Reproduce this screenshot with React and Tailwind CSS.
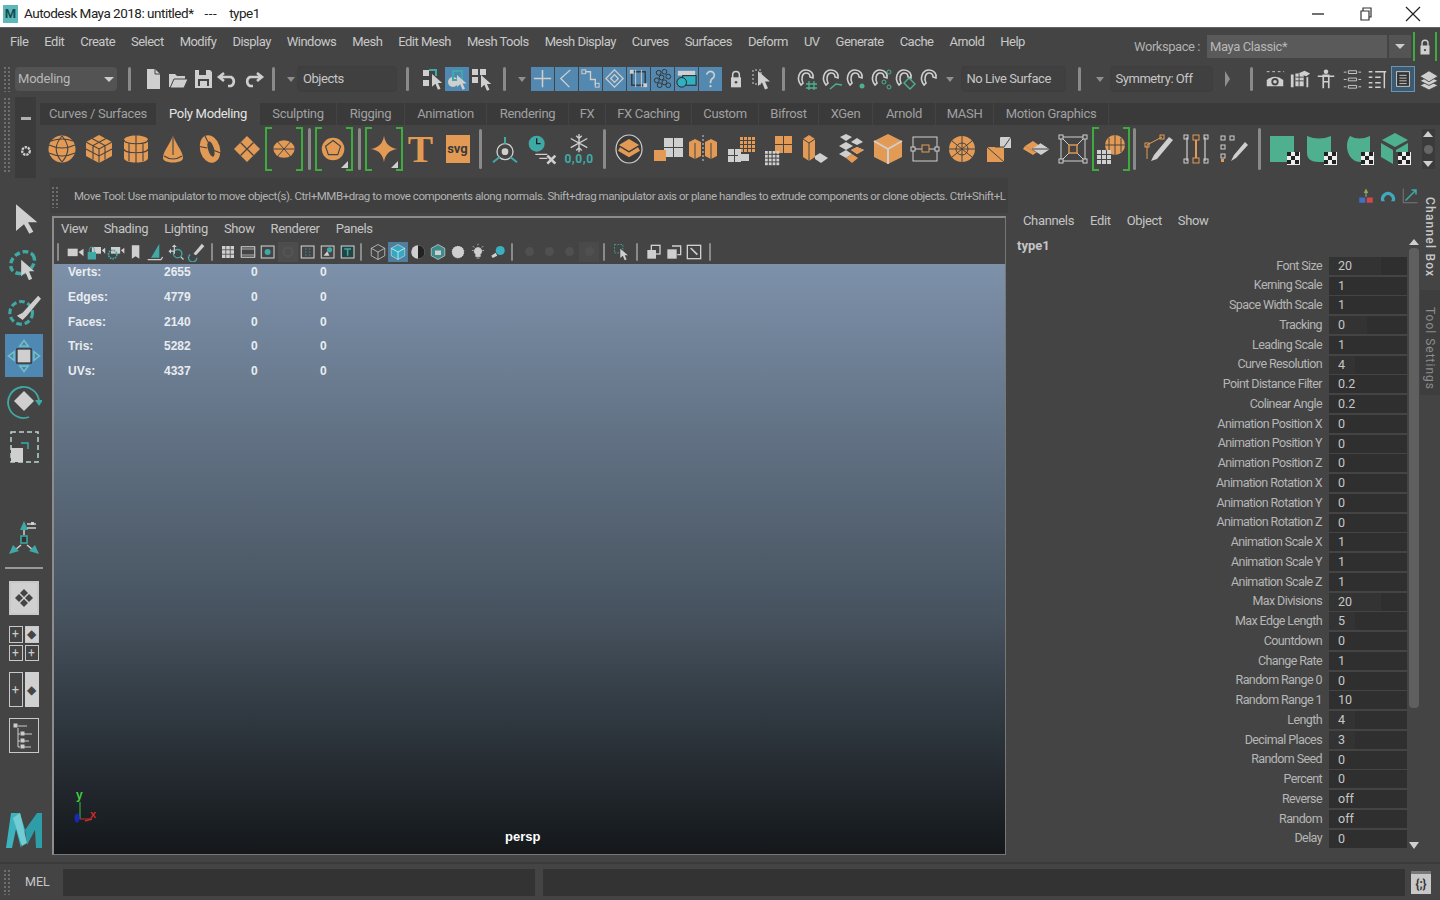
const O = '#e39a55';
const L = '#cfcfcf';
const T = '#4fb08f';
const C = '#3fa9a5';
const D = '#444444';

const font = { fontFamily: 'Roboto, "Liberation Sans", sans-serif' };

const menus = ['File', 'Edit', 'Create', 'Select', 'Modify', 'Display', 'Windows', 'Mesh', 'Edit Mesh', 'Mesh Tools', 'Mesh Display', 'Curves', 'Surfaces', 'Deform', 'UV', 'Generate', 'Cache', 'Arnold', 'Help'];
const tabs = [['Curves / Surfaces', 117], ['Poly Modeling', 103], ['Sculpting', 77], ['Rigging', 68], ['Animation', 82], ['Rendering', 82], ['FX', 37], ['FX Caching', 86], ['Custom', 67], ['Bifrost', 60], ['XGen', 54], ['Arnold', 63], ['MASH', 58], ['Motion Graphics', 115]];
const hud = [['Verts:', '2655'], ['Edges:', '4779'], ['Faces:', '2140'], ['Tris:', '5282'], ['UVs:', '4337']];
const attrs = [['Font Size', '20', 52], ['Kerning Scale', '1'], ['Space Width Scale', '1'], ['Tracking', '0', 38], ['Leading Scale', '1'], ['Curve Resolution', '4', 26], ['Point Distance Filter', '0.2'], ['Colinear Angle', '0.2'], ['Animation Position X', '0'], ['Animation Position Y', '0'], ['Animation Position Z', '0'], ['Animation Rotation X', '0'], ['Animation Rotation Y', '0'], ['Animation Rotation Z', '0'], ['Animation Scale X', '1'], ['Animation Scale Y', '1'], ['Animation Scale Z', '1'], ['Max Divisions', '20', 52], ['Max Edge Length', '5', 26], ['Countdown', '0'], ['Change Rate', '1'], ['Random Range 0', '0'], ['Random Range 1', '10'], ['Length', '4', 26], ['Decimal Places', '3', 26], ['Random Seed', '0'], ['Percent', '0'], ['Reverse', 'off'], ['Random', 'off'], ['Delay', '0']];

function Ic({ s = 24, v = 24, children, className = '' }) {
  return <svg width={s} height={s} viewBox={`0 0 ${v} ${v}`} className={`shrink-0 ${className}`} fill="none">{children}</svg>;
}

function Sep({ h = 'h-[24px]', className = '' }) {
  return <div className={`w-[3px] ${h} bg-[#8a8a8a] rounded-sm shrink-0 ${className}`} />;
}

function Caret({ className = '' }) {
  return <div className={`w-0 h-0 border-l-[4px] border-r-[4px] border-t-[5px] border-l-transparent border-r-transparent border-t-[#8f8f8f] shrink-0 ${className}`} />;
}

function Grip({ className = '' }) {
  return <div className={`w-[8px] shrink-0 bg-[radial-gradient(#6e6e6e_1px,transparent_1px)] bg-[size:4px_4px] ${className}`} />;
}

function Field({ w, label, className = '' }) {
  return <div className={`h-[26px] flex items-center pl-[5px] text-[13px] tracking-[-0.45px] text-[#c6c6c6] border border-[#3e3e3e] bg-[#404040] rounded-sm shrink-0 ${className}`} style={{ width: w }}>{label}</div>;
}

function Arrow({ x = 6, y = 4, f = L, k = 0.8 }) {
  return <path d="M0 0v15l4-3.5 3 7 3-1.2-3-6.8h5z" fill={f} transform={`translate(${x} ${y}) scale(${k})`} />;
}

/* status line */
const statusA = [
  <><path d="M6 2h8l5 5v15H6z" fill={L} /><path d="M14 2v5h5" stroke={D} /></>,
  <><path d="M3 7h6l2 2h8v3H8l-3 8H3z" fill={L} /><path d="M8 12h14l-4 9H4z" fill={L} stroke={D} /></>,
  <><path d="M4 3h15l2 2v16H4z" fill={L} /><rect x="8" y="3" width="7" height="5" fill={D} /><rect x="7" y="12" width="11" height="7" fill={D} /><rect x="9" y="14" width="7" height="5" fill={L} /></>,
  <path d="M8 6 3 10l5 4M3 10h12a5 5 0 0 1 0 9h-3" stroke={L} strokeWidth="2.6" />,
  <path d="M16 6l5 4-5 4M21 10H9a5 5 0 0 0 0 9h3" stroke={L} strokeWidth="2.6" />,
];

const blueIcons = [
  <path d="M12 3v18M3 12h18" stroke={L} strokeWidth="1.6" />,
  <path d="M16 3 6 12l9 9" stroke={L} strokeWidth="1.4" />,
  <><rect x="3" y="3" width="4" height="4" stroke={L} /><rect x="17" y="17" width="4" height="4" stroke={L} /><path d="M7 5h5v8h5v6" stroke={L} strokeWidth="1.4" /></>,
  <path d="M12 3l9 9-9 9-9-9zM12 8l4 4-4 4-4-4z" stroke={L} strokeWidth="1.3" />,
  <><rect x="5" y="5" width="14" height="14" stroke="#333" strokeWidth="1.4" /><path d="M9 3v18M15 3v18" stroke={L} /><rect x="3" y="3" width="4" height="4" fill={L} /><rect x="17" y="17" width="4" height="4" fill={L} /></>,
  <g stroke="#333">{[[8, 6], [14, 5], [18, 10], [11, 11], [6, 14], [14, 16], [9, 19], [18, 19]].map(([x, y]) => <circle key={x * y} cx={x} cy={y} r="2.5" />)}</g>,
  <><rect x="3" y="4" width="18" height="5" fill={L} /><rect x="8" y="9" width="14" height="10" fill="#33b0c0" stroke="#222" /><circle cx="7" cy="16" r="5" fill="#33b0c0" stroke="#222" /></>,
  <><path d="M8 8a4 4 0 1 1 6 4c-2 1-2 2-2 5" stroke={L} strokeWidth="1.7" /><circle cx="12" cy="20" r="1.2" fill={L} /></>,
];

function Magnet({ extra }) {
  return <Ic><path d="M6 18C1 12 4 3 11 3c5 0 8 4 7 8l-3-1c0-3-2-4-4-4-4 0-5 6-3 10z" stroke={L} strokeWidth="1.6" />{extra}</Ic>;
}

const magnets = [
  <path d="M14 14v9M19 14v9M11 17h11M11 21h11" stroke={T} strokeWidth="1.3" />,
  <path d="M10 22l6-5 6 1" stroke={T} strokeWidth="1.5" />,
  <circle cx="18" cy="19" r="2.5" fill={T} />,
  <g stroke={T}><circle cx="20" cy="5" r="2" /><circle cx="15" cy="15" r="2" /><circle cx="20" cy="20" r="2" /></g>,
  <path d="M11 16l5-5 6 6-5 5z" stroke={T} strokeWidth="1.4" />,
  null,
];

const statusB = [
  <><path d="M3 4h3M9 4h3M15 4h3M21 4h1" stroke={L} /><path d="M3 13q9-7 18 0v7H3z" fill={L} /><circle cx="12" cy="15" r="4" fill={D} /><circle cx="12" cy="15" r="2" fill={L} /></>,
  <><path d="M2 7h3v14H2zM7 6h9v14H7z" fill={L} /><path d="M10 6l7-3 6 3-4 3z" fill={L} /><path d="M20 10v11" stroke={L} strokeWidth="2" /><path d="M7 10h9M7 14h9M11 6v14" stroke={D} /></>,
  <><circle cx="12" cy="4" r="2.5" fill={L} /><path d="M3 9h18M9 8h6v7H9zM9 15v7M15 15v7" stroke={L} strokeWidth="1.8" /></>,
  <path d="M8 3h9v3H8zM3 4.500h3M19 4.500h3M8 11h9v3H8zM3 12.500h3M19 12.500h3M8 19h9v3H8zM3 20.500h3M19 20.500h3" stroke={L} />,
  <path d="M3 4h4M10 4h12M3 10h4M10 10h6M3 16h4M10 16h6M3 21h4M10 21h6M20 4v18" stroke={L} strokeWidth="1.6" />,
  <><rect x="5" y="4" width="14" height="16" fill="#333" stroke={L} /><path d="M8 8h8M8 11h8M8 14h8M8 17h8" stroke={L} /></>,
  <g fill={L} stroke={D} strokeWidth="1"><path d="M12 14l10 5-10 5L2 19z" /><path d="M12 9l10 5-10 5L2 14z" /><path d="M12 3l10 6-10 6L2 9z" /></g>,
];

/* shelf */
function Sh({ children, v = 34 }) {
  return <Ic s={v} v={34}>{children}</Ic>;
}

const shelfPrimitives = [
  <><circle cx="17" cy="17" r="13.500" fill={O} /><path d="M4 13q13 6 26 0M4 21q13 6 26 0M6 9q11-4 22 0M17 4c-8 9-8 17 0 26M17 4c8 9 8 17 0 26" stroke={D} strokeWidth="1.1" /></>,
  <><path d="M17 3l13 7v14l-13 7-13-7V10z" fill={O} /><path d="M4 10l13 7 13-7M17 17v14M10 6.500l13 7v14M24 6.500l-13 7v14M4 17l13 7 13-7" stroke={D} strokeWidth="1.1" /></>,
  <><path d="M5 8c0-6 24-6 24 0v18c0 6-24 6-24 0z" fill={O} /><path d="M5 8c0 5 24 5 24 0M5 17c0 5 24 5 24 0M17 3v8M17 11v20M10 11v18M24 11v18M17 8" stroke={D} strokeWidth="1.1" /></>,
  <><path d="M17 3c2 8 10 16 10 23 0 6-20 6-20 0 0-7 8-15 10-23z" fill={O} /><path d="M17 3v20M8 24q9 6 18 0" stroke={D} strokeWidth="1.1" /></>,
  <><ellipse cx="17" cy="17" rx="10" ry="14" fill={O} transform="rotate(-16 17 17)" /><ellipse cx="18" cy="17" rx="3" ry="8" fill={D} transform="rotate(-16 18 17)" /><path d="M4 14l10 2M20 18l10 4M12 4l3 6" stroke={D} strokeWidth="1.1" /></>,
  <><path d="M17 4l13 13-13 13L4 17z" fill={O} /><path d="M10.500 10.500l13 13M23.500 10.500l-13 13" stroke={D} strokeWidth="1.3" /></>,
];

const soccer = <><ellipse cx="17" cy="17" rx="12" ry="10" fill={O} /><path d="M5 17h24M10 9l14 16M24 9L10 25" stroke={D} strokeWidth="1.1" /></>;
const platonic = <><circle cx="16" cy="17" r="12" fill={O} /><path d="M16 8l8 6-3 9H11l-3-9z" stroke={D} strokeWidth="1.2" /></>;
const star = <path d="M17 3c1 8 6 13 14 14-8 1-13 6-14 14-1-8-6-13-14-14 8-1 13-6 14-14z" fill={O} />;

function Bracket({ children, corner }) {
  return (
    <div className="relative w-[38px] h-[44px] flex items-center justify-center border-l-2 border-r-2 border-[#3dab3d] shrink-0">
      <div className="absolute left-0 top-0 w-[5px] h-[2px] bg-[#3dab3d]" />
      <div className="absolute left-0 bottom-0 w-[5px] h-[2px] bg-[#3dab3d]" />
      <div className="absolute right-0 top-0 w-[5px] h-[2px] bg-[#3dab3d]" />
      <div className="absolute right-0 bottom-0 w-[5px] h-[2px] bg-[#3dab3d]" />
      {children}
      {corner && <div className="absolute right-[3px] bottom-[3px] w-0 h-0 border-l-[7px] border-b-[7px] border-l-transparent border-b-[#cfcfcf]" />}
    </div>
  );
}

function Slot({ children }) {
  return <div className="w-[37px] h-[44px] flex items-center justify-center shrink-0">{children}</div>;
}

function grid(x, y, n, size, f) {
  const out = [];
  for (let i = 0; i < n; i++) for (let j = 0; j < n; j++) out.push(<rect key={`${x}${y}${i}${j}`} x={x + i * size} y={y + j * size} width={size - 1} height={size - 1} fill={f} />);
  return out;
}

const shelfMesh = [
  <><ellipse cx="17" cy="17" rx="13" ry="14" stroke={L} strokeWidth="1.2" fill="#3a3a3a" /><path d="M17 7l10 6-10 6-10-6z" fill={O} /><path d="M7 17l10 6 10-6-10 6z" stroke={O} strokeWidth="4" /></>,
  <>{grid(15, 6, 2, 10, L)}<rect x="5" y="18" width="12" height="11" fill={O} /></>,
  <><path d="M3 10l6-3 6 3v14l-6 3-6-3zM19 10l6-3 6 3v14l-6 3-6-3z" fill={O} /><path d="M17 3v28" stroke={L} strokeDasharray="2 2" /><path d="M9 11v16M25 11v16" stroke={D} /></>,
  <>{grid(17, 5, 4, 4, O)}{grid(5, 17, 2, 7, L)}<rect x="15" y="22" width="11" height="7" fill={L} /></>,
  <>{grid(15, 4, 2, 9, O)}{grid(5, 19, 4, 3.800, L)}</>,
  <><path d="M6 7l6-4 6 4v18l-6 4-6-4z" fill={O} /><path d="M12 11v18M6 7l6 4 6-4" stroke={D} /><path d="M18 24l5-3 8 5-7 5-6-4z" fill={L} /></>,
  <g><path d="M12 2l6 3-6 4-6-4zM23 6l6 4-6 3-6-3zM5 14l7-4 7 4-7 4zM17 18l6-3 7 3-7 4zM5 22l7 4 6-4-6-4z" fill={L} /><path d="M17 18l6-3 7 3-7 4z" fill={O} /><path d="M12 26l6-4 6 4-6 5z" fill={O} /></g>,
  <><path d="M17 2l14 7v16l-14 7-14-7V9z" fill={O} /><path d="M17 17l14-8M17 17L3 9M17 17v15" stroke={L} strokeWidth="2" /></>,
  <><rect x="5" y="5" width="24" height="24" stroke={L} /><path d="M3 17h28" stroke={L} /><rect x="14" y="13" width="7" height="7" fill={D} stroke={O} /><rect x="3" y="15" width="4" height="4" fill={D} stroke={L} /><rect x="27" y="15" width="4" height="4" fill={D} stroke={L} /></>,
  <><circle cx="17" cy="17" r="13" fill={O} /><path d="M4 17h26M17 4v26M7 9l20 16M27 9L7 25" stroke={D} /><circle cx="17" cy="17" r="6" stroke={D} /></>,
  <><path d="M18 5h11v11H18z" fill={L} /><path d="M5 15h17v15H5z" fill={O} /><path d="M5 15l17 15M18 5l-5 10h9l7-10" stroke={D} /></>,
  <><path d="M14 9l7 5-7 5-8-5z" fill={O} /><path d="M14 19l-8-5-2 3 10 6 4-3z" fill={O} /><path d="M22 11l9 6-9 6-9-6z" fill={L} /><path d="M22 11l9 6M13 17l18 0" stroke={D} /></>,
  <><rect x="5" y="5" width="24" height="24" stroke={L} /><path d="M5 5l8 8M29 5l-8 8M5 29l8-8M29 29l-8-8" stroke={L} /><rect x="13" y="13" width="8" height="8" stroke={O} strokeWidth="1.4" /><g fill={D} stroke={L}><rect x="3" y="3" width="4" height="4" /><rect x="27" y="3" width="4" height="4" /><rect x="3" y="27" width="4" height="4" /><rect x="27" y="27" width="4" height="4" /></g></>,
];

const meshTools = [
  <><path d="M5 27V13L20 5" stroke={O} /><path d="M9 29l3-6L27 5l4 3-16 19z" fill={L} /><rect x="3" y="11" width="4" height="4" stroke={O} /><rect x="18" y="3" width="4" height="4" stroke={O} /></>,
  <><path d="M8 5v24M26 5v24M17 8v18" stroke={L} strokeWidth="1.2" /><path d="M17 8v18" stroke={O} strokeWidth="2" /><g stroke={L}><rect x="5" y="3" width="4" height="4" /><rect x="25" y="3" width="4" height="4" /><rect x="5" y="27" width="4" height="4" /><rect x="25" y="27" width="4" height="4" /></g><rect x="14" y="3" width="6" height="5" stroke={O} /><rect x="14" y="26" width="6" height="5" stroke={O} /></>,
  <><g stroke={L}><rect x="5" y="4" width="4" height="4" /><rect x="14" y="4" width="4" height="4" /><rect x="5" y="13" width="4" height="4" /><rect x="5" y="22" width="4" height="4" /></g><rect x="5" y="27" width="3" height="3" fill={O} /><path d="M15 29l3-6 11-13 3 3-12 13z" fill={L} /></>,
];

function Mat({ d }) {
  return <Sh><path d={d} fill={T} /><rect x="20" y="20" width="13" height="13" fill="#eee" /><g fill="#222"><rect x="20" y="20" width="4" height="4" /><rect x="28" y="20" width="4" height="4" /><rect x="24" y="24" width="4" height="4" /><rect x="20" y="28" width="4" height="4" /><rect x="28" y="28" width="4" height="4" /></g></Sh>;
}

/* tool box */
function Toolbox() {
  return (
    <div className="w-[50px] pr-[3px] pt-[19px] shrink-0 flex flex-col items-center">
      <div className="h-[44px] flex items-center justify-center"><Ic s={32}><path d="M6 1v20l6-5 4 7 3-1.500-4-7h7z" fill={L} /></Ic></div>
      <div className="h-[46px] flex items-center justify-center"><Ic s={34}><ellipse cx="11" cy="11" rx="9" ry="7" stroke={C} strokeWidth="2.4" strokeDasharray="4 2" transform="rotate(-35 11 11)" /><Arrow x={10} y={9} k={0.78} /></Ic></div>
      <div className="h-[46px] flex items-center justify-center"><Ic s={34}><ellipse cx="10" cy="14" rx="8" ry="8" stroke={C} strokeWidth="2.2" strokeDasharray="4 2" /><path d="M7 16l4-2L22 2l2 2-10 12-3 3z" fill={L} /></Ic></div>
      <div className="w-[38px] h-[43px] mt-[1px] bg-[#4f89b3] flex items-center justify-center">
        <Ic s={34}><rect x="7" y="7" width="10" height="10" fill={L} stroke="#333" /><path d="M12 1l3 4H9zM12 23l3-4H9zM1 12l4-3v6zM23 12l-4-3v6z" stroke="#77c3c3" /></Ic>
      </div>
      <div className="h-[47px] flex items-center justify-center">
        <Ic s={36} v={36}><path d="M23 34A15.500 15.500 0 1 1 33 18" stroke={C} strokeWidth="1.800" /><path d="M29 17h8l-4 6z" fill={C} /><path d="M18 8l10 10-10 10-10-10z" fill={L} /></Ic>
      </div>
      <div className="h-[46px] flex items-center justify-center">
        <Ic s={36} v={36}><rect x="5" y="3" width="27" height="30" stroke="#b9d4d2" strokeWidth="1.500" strokeDasharray="5 3" /><path d="M15 14h7v6" stroke={C} strokeWidth="1.500" /><rect x="5" y="19" width="12" height="14" fill={L} /></Ic>
      </div>
      <div className="h-[45px] shrink-0" />
      <div className="h-[46px] flex items-center justify-center">
        <Ic s={36} v={36}><path d="M18 10v5M15 25l-6 5M21 25l6 5" stroke={L} strokeWidth="1.500" /><path d="M18 1l-4 9h8zM3 34l4-9 6 6zM33 34l-4-9-6 6z" fill={C} /><rect x="15" y="16" width="6" height="7" stroke={C} strokeWidth="1.500" fill="#333" /><path d="M21 4h9M21 8h9" stroke={L} strokeWidth="1.500" /><rect x="25" y="2" width="3" height="3" fill={L} /></Ic>
      </div>
      <div className="w-[38px] h-[2px] bg-[#999] mt-[6px] mb-[12px] shrink-0" />
      <div className="w-[30px] h-[34px] shrink-0 border-[2px] border-[#c8c8c8] bg-[#d0d0d0] flex items-center justify-center">
        <svg width="20" height="20" viewBox="0 0 20 20" fill="#444"><path d="M10 1l4 4-4 4-4-4zM10 11l4 4-4 4-4-4zM5 6l4 4-4 4-4-4zM15 6l4 4-4 4-4-4z" /></svg>
      </div>
      <div className="grid grid-cols-2 gap-[2px] w-[30px] h-[35px] mt-[11px] shrink-0">
        {['+', '◆', '+', '+'].map((g, i) => <div key={i} className={`border border-[#c8c8c8] flex items-center justify-center text-[12px] leading-none ${g === '◆' ? 'bg-[#d0d0d0] text-[#444]' : 'text-[#ccc]'}`}>{g}</div>)}
      </div>
      <div className="grid grid-cols-2 gap-[2px] w-[30px] h-[35px] mt-[11px] shrink-0">
        <div className="border border-[#c8c8c8] flex items-center justify-center text-[13px] text-[#ccc] leading-none">+</div>
        <div className="bg-[#d0d0d0] flex items-center justify-center text-[12px] text-[#444] leading-none">◆</div>
      </div>
      <div className="w-[30px] h-[35px] mt-[11px] flex items-center justify-center border border-[#c8c8c8] shrink-0">
        <svg width="26" height="30" viewBox="0 0 26 30" fill="none" stroke="#ccc"><rect x="3" y="3" width="3" height="3" fill="#ccc" /><path d="M7 5h9M7 7v19M7 13h2M7 20h2M7 26h2M13 13h8M13 20h5M13 26h7" /><rect x="10" y="11" width="3" height="3" fill="#ccc" /><rect x="10" y="18" width="3" height="3" fill="#ccc" /><rect x="10" y="24" width="3" height="3" fill="#ccc" /></svg>
      </div>
      <div className="mt-[59px] shrink-0">
        <svg width="38" height="38" viewBox="0 0 38 38" className="block"><path d="M1 36L6 1h9l5 17-4 18-5-19-4 19z" fill="#3db3bd" /><path d="M20 18 32 1h5v35h-6l-1-18-8 15z" fill="#2d9da8" /><path d="M15 1l7 30-5 3L8 6z" fill="#71cdd3" /></svg>
      </div>
    </div>
  );
}

function ViewBar() {
  const groupA = [
    <><rect x="2" y="8" width="12" height="9" fill={L} /><path d="M15 12l6-4v9z" fill={L} /></>,
    <><rect x="7" y="6" width="11" height="8" fill={L} /><path d="M19 10l4-3v7z" fill={L} /><rect x="2" y="12" width="10" height="9" fill={C} /><path d="M4 12V9a3 3 0 0 1 6 0v3" stroke={C} /></>,
    <><rect x="6" y="6" width="11" height="8" fill={L} /><path d="M18 10l4-3v7z" fill={L} /><circle cx="8" cy="15" r="5" stroke={C} strokeWidth="2" strokeDasharray="2 1" /></>,
    <path d="M7 4h9v16l-4.500-3L7 20z" fill={L} />,
    <><path d="M16 2v17H6z" fill={C} /><path d="M2 21h16l2-3" stroke={L} strokeWidth="1.5" /></>,
    <><path d="M10 3l3 3H7zM3 11l3-3v6zM17 4" fill={L} /><circle cx="14" cy="14" r="5" stroke={C} strokeWidth="1.6" /><path d="M10 6v8M5 11h5M18 18l3 3" stroke={L} strokeWidth="1.4" /></>,
    <><path d="M9 14l10-12 3 3-10 11z" fill={L} /><path d="M5 15a5 5 0 1 0 8 4" stroke={C} strokeWidth="1.6" /></>,
  ];
  const groupB = [
    <><rect x="4" y="4" width="16" height="16" fill={L} /><path d="M9 4v16M15 4v16M4 9h16M4 15h16" stroke={D} /></>,
    <><rect x="3" y="5" width="18" height="14" stroke={L} strokeWidth="1.4" /><path d="M3 8h18M3 16h18" stroke={L} /></>,
    <><rect x="3" y="4" width="17" height="16" stroke={L} strokeWidth="1.4" /><circle cx="11.500" cy="12" r="4" fill={C} /></>,
    <circle cx="12" cy="12" r="6" stroke="#545454" strokeWidth="3" />,
    <><rect x="3" y="4" width="17" height="16" stroke={L} strokeWidth="1.4" /><path d="M8 8h2M13 8h2M8 12h2M13 12h2M8 16h2M13 16h2" stroke={C} /></>,
    <><rect x="3" y="4" width="17" height="16" stroke={L} strokeWidth="1.4" /><circle cx="14" cy="9" r="3.500" fill={C} /><path d="M6 17l5-6 3 6z" fill={L} /></>,
    <><rect x="3" y="4" width="17" height="16" stroke={L} strokeWidth="1.4" fill="#244" /><path d="M7 8h9M11.500 8v9" stroke={C} strokeWidth="2" /></>,
  ];
  const cube = (f) => <><path d="M12 2l9 5v10l-9 5-9-5V7z" fill={f} stroke={L} /><path d="M3 7l9 5 9-5M12 12v10" stroke={f === 'none' ? L : '#dff'} /></>;
  const groupC = [
    cube('none'),
    cube('#36a8c0'),
    <><circle cx="12" cy="12" r="9" fill={L} /><path d="M12 3a9 9 0 0 1 0 18" fill="#222" /></>,
    <><path d="M12 2l9 5v10l-9 5-9-5V7z" stroke={L} fill="#3c8c8c" /><path d="M8 10h8v6H8z" fill={L} /></>,
    <circle cx="12" cy="12" r="8.500" fill={L} stroke="#222" strokeDasharray="1.500 1.500" />,
    <><path d="M12 6a5 5 0 0 1 3 9v3H9v-3a5 5 0 0 1 3-9zM10 20h4M12 1v2M4 10h2M18 10h2M5 4l2 2M19 4l-2 2" stroke={L} fill={L} /></>,
    <><circle cx="15" cy="10" r="6" fill="#3ab0c0" /><path d="M3 17l6-4 2 4-6 3z" fill={L} /></>,
  ];
  const dim = [530, 551, 570, 590];
  return (
    <div className="h-[25px] flex items-center pl-[3px] shrink-0">
      <Sep h="h-[18px]" className="!w-[2px]" />
      <div className="flex w-[145px] ml-[7px]">{groupA.map((g, i) => <div key={i} className="w-[20px] flex justify-center"><Ic s={20}>{g}</Ic></div>)}</div>
      <Sep h="h-[18px]" className="!w-[2px] ml-[0px]" />
      <div className="flex ml-[5px]">{groupB.map((g, i) => <div key={i} className={`w-[20px] h-[20px] flex items-center justify-center ${i === 3 ? 'bg-[#4d4d4d]' : ''}`}><Ic s={18}>{g}</Ic></div>)}</div>
      <Sep h="h-[18px]" className="!w-[2px] ml-[2px]" />
      <div className="flex ml-[6px]">{groupC.map((g, i) => <div key={i} className={`w-[20px] h-[20px] flex items-center justify-center ${i === 1 ? 'bg-[#4f7f9f]' : ''}`}><Ic s={18}>{g}</Ic></div>)}</div>
      <Sep h="h-[18px]" className="!w-[2px] ml-[3px]" />
      <div className="flex ml-[6px]">{dim.map((x, i) => <div key={x} className={`w-[20px] h-[20px] flex items-center justify-center ${i === 3 ? 'bg-[#4a4a4a]' : ''}`}><div className="w-[9px] h-[9px] rounded-full bg-[#505050]" /></div>)}</div>
      <Sep h="h-[18px]" className="!w-[2px] ml-[4px]" />
      <div className="w-[24px] flex justify-center ml-[5px]"><Ic s={20}><rect x="3" y="3" width="10" height="10" stroke={C} strokeDasharray="2 1.500" /><Arrow x={10} y={8} k={0.75} /></Ic></div>
      <Sep h="h-[18px]" className="!w-[2px] ml-[2px]" />
      <div className="flex ml-[6px]">
        <div className="w-[20px] flex justify-center"><Ic s={16}><rect x="8" y="2" width="13" height="13" stroke={L} strokeWidth="2" /><rect x="2" y="9" width="13" height="13" fill={L} /></Ic></div>
        <div className="w-[20px] flex justify-center"><Ic s={16}><path d="M9 3h13v13h-5" stroke={L} strokeWidth="2" /><rect x="2" y="8" width="14" height="14" fill={L} /></Ic></div>
        <div className="w-[20px] flex justify-center"><Ic s={16}><rect x="2" y="2" width="20" height="20" stroke={L} strokeWidth="2" /><path d="M7 6l10 10" stroke={L} strokeWidth="2.500" /></Ic></div>
      </div>
      <Sep h="h-[18px]" className="!w-[2px] ml-[5px]" />
    </div>
  );
}

function Viewport() {
  return (
    <div className="w-[954px] h-[639px] mt-[3px] ml-[2px] shrink-0 flex flex-col border-t-2 border-l-2 border-[#8c8c8c] border-r border-b border-r-[#777] border-b-[#777]">
      <div className="h-[21px] flex items-center gap-[16px] pl-[7px] text-[13px] tracking-[-0.35px] text-[#c4c4c4] shrink-0">
        {['View', 'Shading', 'Lighting', 'Show', 'Renderer', 'Panels'].map((m) => <span key={m}>{m}</span>)}
      </div>
      <ViewBar />
      <div className="relative flex-1 min-h-0 bg-gradient-to-b from-[#7d91aa] via-[#46525e] via-60% to-[#14181b] overflow-hidden" style={{ fontFamily: '"Liberation Sans", sans-serif' }}>
        <div className="grid grid-cols-[96px_87px_69px_20px] pl-[14px] text-[12px] leading-[16px] font-bold text-[#e8ecf0]">
          {hud.map(([k, n]) => (
            <div key={k} className="contents">
              <div className="h-[24.750px]">{k}</div>
              <div>{n}</div>
              <div>0</div>
              <div>0</div>
            </div>
          ))}
        </div>
        <svg className="absolute left-[16px] bottom-[26px]" width="34" height="40" viewBox="0 0 34 40" fill="none">
          <path d="M10 14v17" stroke="#35c24a" /><path d="M10 31h12" stroke="#c92b2b" /><path d="M22 31l-7 2" stroke="#c92b2b" strokeWidth="1.500" /><ellipse cx="7" cy="30" rx="2.500" ry="4.500" fill="#1a28b0" />
          <text x="6" y="11" fontSize="12" fontWeight="bold" fill="#3fd040">y</text>
          <text x="20" y="30" fontSize="11" fontWeight="bold" fill="#d02a2a">x</text>
        </svg>
        <div className="absolute left-[451px] bottom-[8px] text-[13px] font-bold text-white">persp</div>
      </div>
    </div>
  );
}

function ChannelBox() {
  return (
    <div className="w-[409px] ml-[3px] pt-[35px] shrink-0 relative">
      <div className="absolute right-[1px] top-[9px] flex gap-[4px]">
        <Ic s={18}><path d="M12 2l3 6H9z" fill="#8bb04a" /><path d="M12 8v5" stroke={L} /><path d="M3 14h8v7H3z" fill="#4070c0" /><path d="M13 14h8v7h-8z" fill="#d04a4a" /></Ic>
        <Ic s={18}><path d="M3 19a9.500 9.500 0 1 1 18 0h-5a5 5 0 1 0-8 0z" fill="#3fa9c0" /></Ic>
        <Ic s={18}><path d="M3 2v19h19" stroke="#888" /><path d="M6 18L20 4M14 4h6v6" stroke={C} strokeWidth="2" /></Ic>
      </div>
      <div className="h-[16px] flex items-center gap-[16px] pl-[12px] text-[13px] tracking-[-0.35px] text-[#c4c4c4]">
        {['Channels', 'Edit', 'Object', 'Show'].map((m) => <span key={m}>{m}</span>)}
      </div>
      <div className="pl-[6px] mt-[8px] h-[19px] leading-[18px] text-[13px] font-bold text-[#c4c4c4]">type1</div>
      <div className="flex">
        <div className="w-[396px] shrink-0">
          {attrs.map(([k, val, bar]) => (
            <div key={k} className="h-[19.760px] flex items-center">
              <div className="w-[311px] text-right text-[12.500px] tracking-[-0.6px] text-[#b6b6b6]">{k}</div>
              <div className="relative w-[78px] h-[18px] ml-[7px] bg-[#2f2f2f] text-[12.500px] text-[#c6c6c6] pl-[9px] leading-[18px]">
                {bar && <div className="absolute left-0 top-0 bottom-0 bg-[#333333]" style={{ width: bar }} />}
                <span className="relative">{val}</span>
              </div>
            </div>
          ))}
        </div>
        <div className="w-[13px] flex flex-col items-center -mt-[17px]">
          <div className="w-0 h-0 border-l-[5px] border-r-[5px] border-b-[6px] border-l-transparent border-r-transparent border-b-[#cfcfcf]" />
          <div className="w-[10px] h-[460px] mt-[3px] bg-[#5f5f5f] rounded-sm" />
          <div className="flex-1 min-h-0" />
          <div className="w-0 h-0 border-l-[5px] border-r-[5px] border-t-[7px] border-l-transparent border-r-transparent border-t-[#cfcfcf]" />
        </div>
      </div>
    </div>
  );
}

export default function App() {
  return (
    <div className="w-[1440px] h-[900px] overflow-hidden bg-[#444444] flex flex-col select-none" style={font}>
      {/* title bar */}
      <div className="h-[28px] bg-white flex items-center shrink-0 pl-[3px] border-b border-[#666]">
        <div className="w-[15px] h-[18px] bg-[#5db9b9] flex items-center justify-center text-[13px] font-bold leading-none text-[#164c50]">M</div>
        <div className="ml-[6px] flex text-[13.500px] text-[#222] tracking-[-0.5px] whitespace-nowrap">
          <span>Autodesk Maya 2018: untitled*</span>
          <span className="ml-[11px] tracking-[0.5px]">---</span>
          <span className="ml-[12px]">type1</span>
        </div>
        <div className="ml-auto flex items-center">
          <Ic s={14} v={14}><path d="M1 7h12" stroke="#333" strokeWidth="1.4" /></Ic>
          <Ic s={14} v={14} className="ml-[33px]"><path d="M3 4h8v9H3zM5 4V1h8v9h-2" stroke="#333" strokeWidth="1.2" /></Ic>
          <Ic s={16} v={16} className="ml-[33px] mr-[19px]"><path d="M1 1l14 14M15 1L1 15" stroke="#222" strokeWidth="1.2" /></Ic>
        </div>
      </div>

      {/* menu bar */}
      <div className="h-[33px] flex items-start shrink-0 relative">
        <div className="flex gap-[16px] pl-[10px] pt-[4px] text-[13px] text-[#c8c8c8] tracking-[-0.52px]">
          {menus.map((m) => <span key={m}>{m}</span>)}
        </div>
        <div className="ml-auto flex items-center pt-[4px] pr-[3px]">
          <span className="text-[13px] text-[#b0b0b0] mr-[7px] tracking-[-0.45px]">Workspace :</span>
          <div className="w-[180px] h-[23px] bg-[#5a5a5a] text-[13px] tracking-[-0.4px] text-[#b8b8b8] flex items-center pl-[3px]">Maya Classic*</div>
          <div className="w-[22px] h-[23px] bg-[#545454] ml-[2px] flex items-center justify-center"><Caret className="!border-t-[#ccc] !border-l-[5px] !border-r-[5px]" /></div>
          <div className="relative w-[24px] h-[29px] ml-[2px] border-l-2 border-r-2 border-[#3dab3d] flex items-center justify-center">
            <Ic s={18}><path d="M8 11V7a4 4 0 0 1 8 0v4" stroke={L} strokeWidth="1.800" /><rect x="6" y="10" width="12" height="12" fill={L} /><circle cx="12" cy="16" r="1.500" fill={D} /></Ic>
          </div>
        </div>
      </div>

      {/* status line */}
      <div className="h-[36px] flex items-center shrink-0 pl-[3px] text-[13px]">
        <Grip className="h-[26px] mr-[4px]" />
        <div className="w-[102px] h-[24px] bg-[#535353] rounded-sm flex items-center pl-[3px] tracking-[-0.2px] text-[#b8b8b8] shrink-0">Modeling<Caret className="ml-auto mr-[3px] !border-t-[#ccc] !border-l-[5px] !border-r-[5px]" /></div>
        <Sep className="ml-[11px]" />
        <div className="flex ml-[10px] gap-[1px]">{statusA.map((g, i) => <Ic key={i}>{g}</Ic>)}</div>
        <Sep className="ml-[7px]" />
        <Caret className="ml-[12px]" />
        <Field w={100} label="Objects" className="ml-[2px]" />
        <Sep className="ml-[9px]" />
        <Ic className="ml-[12px]"><rect x="2" y="3" width="6" height="6" fill={L} /><rect x="2" y="13" width="6" height="6" fill={L} /><path d="M8 3h7v6" stroke={C} strokeWidth="2" /><Arrow x={11} y={7} k={0.85} /></Ic>
        <div className="w-[24px] h-[24px] bg-[#4f89b3] shrink-0"><Ic><circle cx="8" cy="15" r="5" fill={L} /><rect x="8" y="4" width="9" height="9" stroke={C} strokeWidth="2" /><Arrow x={12} y={8} k={0.8} /></Ic></div>
        <Ic className="ml-[1px]"><rect x="2" y="2" width="6" height="6" fill={L} /><rect x="10" y="2" width="6" height="6" fill={L} /><rect x="2" y="10" width="6" height="6" fill={L} /><Arrow x={11} y={8} k={0.85} /></Ic>
        <Sep className="ml-[9px]" />
        <Caret className="ml-[12px]" />
        <div className="flex ml-[5px] gap-[1px]">{blueIcons.map((g, i) => <div key={i} className="w-[23px] h-[24px] bg-[#5389b0] flex justify-center"><Ic s={23}>{g}</Ic></div>)}</div>
        <Ic s={20} className="ml-[4px]"><path d="M8 11V7a4 4 0 0 1 8 0v4" stroke={L} strokeWidth="1.800" /><rect x="6" y="10" width="12" height="12" fill={L} /><circle cx="12" cy="16" r="1.500" fill={D} /></Ic>
        <Ic className="ml-[2px]"><path d="M5 3v14h8V3z" stroke={L} strokeDasharray="2 2" /><Arrow x={10} y={4} k={1} /></Ic>
        <Sep className="ml-[10px]" />
        <div className="flex ml-[10px] gap-[0.500px]">{magnets.map((g, i) => <Magnet key={i} extra={g} />)}</div>
        <Caret className="ml-[4px]" />
        <Field w={105} label="No Live Surface" className="ml-[7px]" />
        <Sep className="ml-[12px]" />
        <Caret className="ml-[15px]" />
        <Field w={103} label="Symmetry: Off" className="ml-[6px]" />
        <div className="w-0 h-0 ml-[12px] border-t-[8px] border-b-[8px] border-l-[5px] border-t-transparent border-b-transparent border-l-[#8f8f8f] shrink-0" />
        <Sep className="ml-[20px]" />
        <div className="flex ml-[10px] gap-[1.700px]">{statusB.map((g, i) => <div key={i} className={`w-[24px] h-[26px] flex items-center justify-center ${i === 5 ? 'bg-[#3c5a72] border border-[#6a96b6]' : ''}`}><Ic s={22}>{g}</Ic></div>)}</div>
      </div>

      {/* shelf */}
      <div className="h-[81px] flex shrink-0 pl-[3px]">
        <Grip className="h-[76px] mr-[4px]" />
        <div className="w-[21px] bg-[#3b3b3b] flex flex-col items-center justify-around py-[8px] shrink-0">
          <div className="w-[10px] h-[3px] bg-[#b0b0b0]" />
          <Ic s={14}><circle cx="12" cy="12" r="6.500" stroke={L} strokeWidth="4" strokeDasharray="4 1.500" /></Ic>
        </div>
        <div className="flex-1 min-w-0 ml-[4px] pt-[6px]">
          <div className="h-[22px] flex items-end bg-[#3a3a3a] text-[13px] tracking-[-0.3px] text-[#a0a0a0]">
            {tabs.map(([t, w]) => (
              <div key={t} className={`h-[22px] flex items-center justify-center border-r border-[#444] shrink-0 ${t === 'Poly Modeling' ? 'bg-[#444444] text-[#e4e4e4]' : 'bg-[#3a3a3a]'}`} style={{ width: w }}>{t}</div>
            ))}
          </div>
          <div className="h-[48px] flex items-center pl-[3px]">
            {shelfPrimitives.map((g, i) => <Slot key={i}><Sh>{g}</Sh></Slot>)}
            <Bracket><Sh v={30}>{soccer}</Sh></Bracket>
            <Sep h="h-[42px]" className="mx-[4.500px]" />
            <Bracket corner><Sh v={32}>{platonic}</Sh></Bracket>
            <Sep h="h-[42px]" className="mx-[4.500px]" />
            <Bracket corner><Sh v={32}>{star}</Sh></Bracket>
            <div className="-ml-[1px]"><Slot><span className="text-[38px] leading-none font-bold text-[#e39a55]" style={{ fontFamily: '"Liberation Serif", serif' }}>T</span></Slot></div>
            <Slot><div className="w-[24px] h-[28px] bg-[#e39a55] flex items-center justify-center text-[13px] font-bold text-[#3a3a3a]">svg</div></Slot>
            <Sep h="h-[40px]" className="ml-[3px] mr-[4.500px]" />
            <Slot><Ic s={32}><circle cx="12" cy="14" r="6" stroke={L} /><circle cx="12" cy="14" r="2.500" fill={L} /><path d="M12 3v5M3 22l5-4M21 22l-5-4" stroke={C} strokeWidth="1.500" /></Ic></Slot>
            <Slot><Ic s={32}><circle cx="8" cy="8" r="6" fill={C} /><path d="M8 4v4h3" stroke="#222" /><path d="M7 16h9M10 19h6" stroke={L} /><path d="M16 17l6 6M22 17l-6 6" stroke={L} strokeWidth="2" /></Ic></Slot>
            <Slot>
              <div className="flex flex-col items-center">
                <Ic s={22}><path d="M12 1v20M3 6l18 10M21 6L3 16M9 3l3 3 3-3M9 19l3-3 3 3" stroke={L} strokeWidth="1.500" /></Ic>
                <span className="text-[12px] leading-none font-bold tracking-[0.500px] text-[#3fa9a5] -mt-[2px]">0,0,0</span>
              </div>
            </Slot>
            <Sep h="h-[40px]" className="mx-[5px]" />
            {shelfMesh.map((g, i) => <Slot key={i}><Sh>{g}</Sh></Slot>)}
            <Bracket>
              <Sh v={34}><circle cx="21" cy="13" r="10" fill={O} /><path d="M11 13h20M21 3v20M15 6v14M27 6v14" stroke={D} />{grid(3, 18, 3, 5, L)}</Sh>
            </Bracket>
            <Sep h="h-[42px]" className="ml-[3px] mr-[5px]" />
            {meshTools.map((g, i) => <Slot key={i}><Sh>{g}</Sh></Slot>)}
            <Sep h="h-[42px]" className="ml-[6px] mr-[5px]" />
            <Slot><Mat d="M3 4h24v26H3z" /></Slot>
            <Slot><Mat d="M3 4q12 5 24 0v26H15q-12 0-12-9z" /></Slot>
            <Slot><Mat d="M9 4q9 5 20 0v26H19C8 30 2 14 9 4z" /></Slot>
            <Slot><Mat d="M17 1l13 7-13 7-13-7zM3 11l12 7v14L3 25zM18 18l12-7v9H18z" /></Slot>
            <div className="w-[13px] h-[40px] ml-[8px] bg-[#3b3b3b] flex flex-col items-center justify-between py-[2px] shrink-0">
              <div className="w-0 h-0 border-l-[5px] border-r-[5px] border-b-[6px] border-l-transparent border-r-transparent border-b-[#cfcfcf]" />
              <div className="w-[9px] h-[9px] rounded-full bg-[#666]" />
              <div className="w-0 h-0 border-l-[5px] border-r-[5px] border-t-[6px] border-l-transparent border-r-transparent border-t-[#cfcfcf]" />
            </div>
          </div>
        </div>
      </div>

      {/* main */}
      <div className="h-[684px] shrink-0 flex">
        <Toolbox />
        <div className="w-[958px] shrink-0 flex flex-col">
          <div className="h-[35px] pt-[2px] flex items-center text-[11.500px] text-[#b2b2b2] shrink-0 bg-[#3f3f3f]">
            <Grip className="h-[22px] ml-[1px] mr-[15px]" />
            <span className="whitespace-nowrap tracking-[-0.44px]">Move Tool: Use manipulator to move object(s). Ctrl+MMB+drag to move components along normals. Shift+drag manipulator axis or plane handles to extrude components or clone objects. Ctrl+Shift+L</span>
          </div>
          <Viewport />
        </div>
        <ChannelBox />
        <div className="w-[20px] shrink-0 flex flex-col items-center">
          <div className="w-full h-[112px] pt-[19px] bg-[#444] flex justify-center">
            <span className="text-[12px] font-medium text-[#c8c8c8] tracking-[1.2px] [writing-mode:vertical-rl]">Channel Box</span>
          </div>
          <div className="w-full h-[105px] pt-[17px] bg-[#3e3e3e] flex justify-center">
            <span className="text-[12px] text-[#8c8c8c] tracking-[1px] [writing-mode:vertical-rl]">Tool Settings</span>
          </div>
        </div>
      </div>

      {/* command line */}
      <div className="h-[38px] flex items-center shrink-0 bg-[#444] border-t-2 border-[#3b3b3b] pl-[3px] text-[12.500px] text-[#c8c8c8]">
        <Grip className="h-[26px] mr-[14px]" />
        <span className="w-[38px] shrink-0">MEL</span>
        <div className="w-[472px] h-[27px] bg-[#333333] shrink-0" />
        <div className="w-[862px] h-[27px] ml-[8px] bg-[#333333] shrink-0" />
        <div className="w-[20px] h-[23px] ml-[6px] bg-[#c8c8c8] border-t-[3px] border-[#777] text-[#333] text-[12px] flex items-center justify-center font-bold shrink-0">{'{;}'}</div>
      </div>
    </div>
  );
}
